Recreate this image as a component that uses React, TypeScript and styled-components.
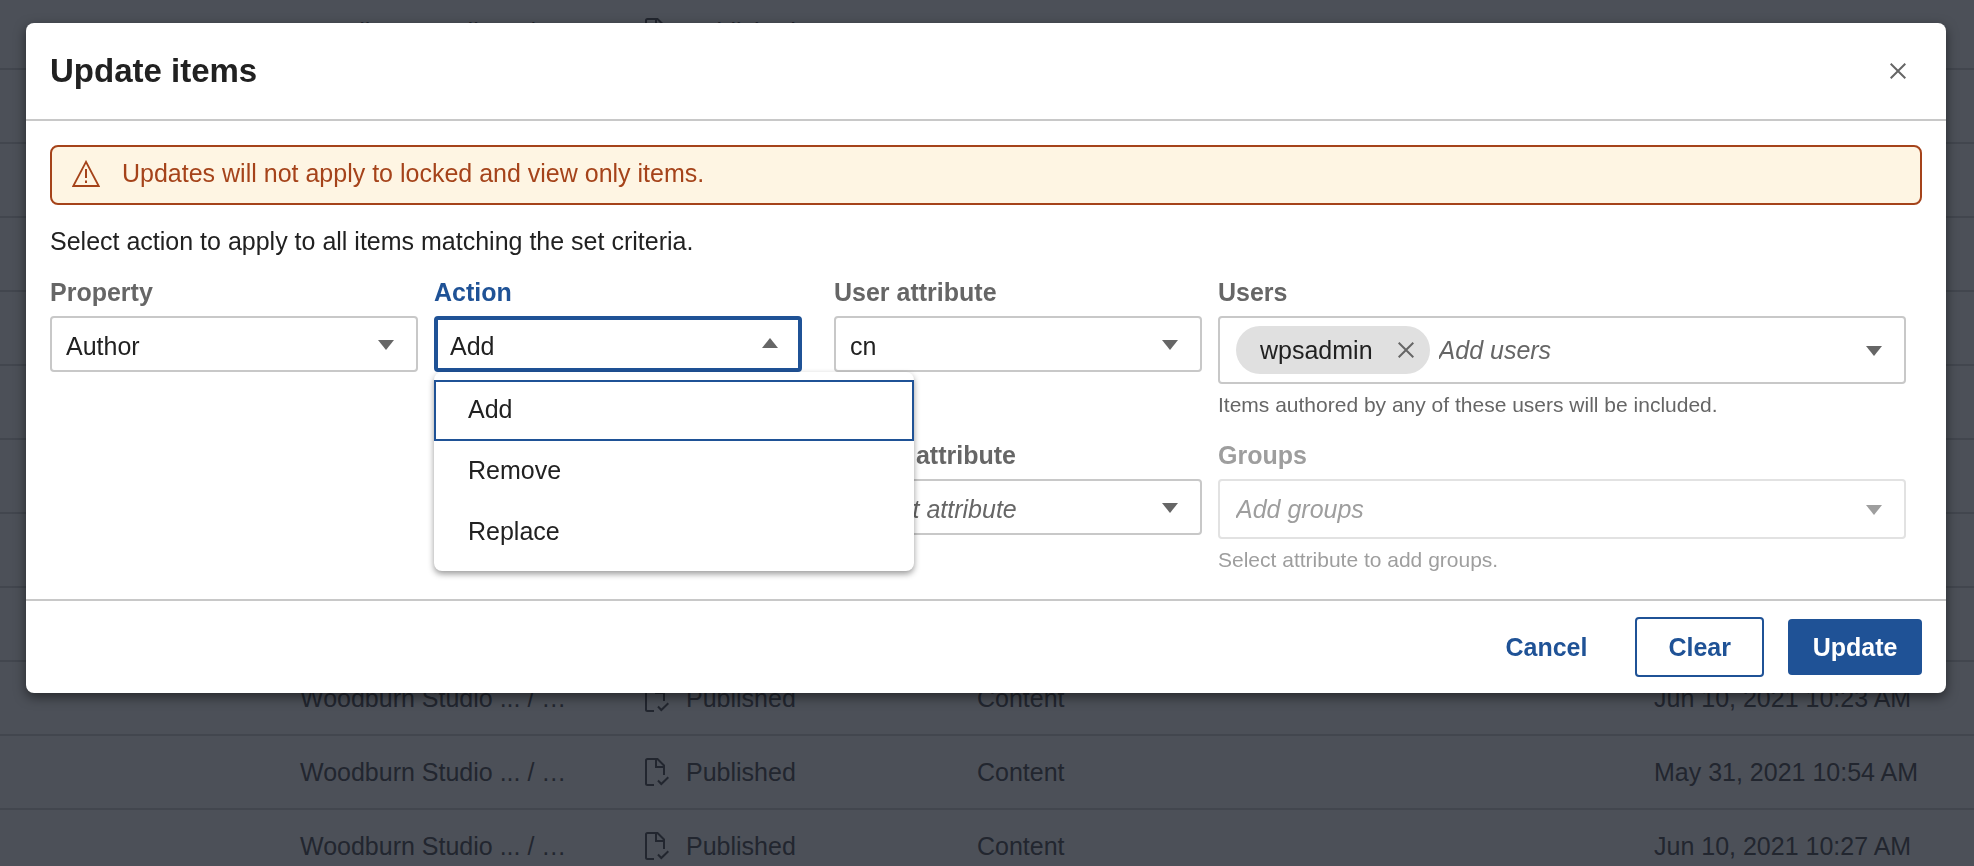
import React from "react";
import styled, { createGlobalStyle, css } from "styled-components";

const BLUE = "#1f5296";
const RUST = "#a5431a";
const INK = "#212121";
const GREY = "#666666";
const FAINT = "#9e9e9e";

const GlobalStyle = createGlobalStyle`
  *, *::before, *::after { box-sizing: border-box; }
  body { margin: 0; background: #4c5058; }
  body, button, input, select {
    font-family: "Liberation Sans", Arial, Helvetica, sans-serif;
    font-size: 25px;
    color: ${INK};
  }
`;

const Page = styled.main`
  height: 100vh;
  overflow: hidden;
`;

const ItemTable = styled.table`
  width: 100%;
  margin-top: -4px;
  border-collapse: separate;
  border-spacing: 0;
  table-layout: fixed;
  color: #22262f;
`;

const ItemCell = styled.td`
  height: 74px;
  padding: 0;
  border-bottom: 2px solid #42464e;
  white-space: nowrap;
`;

const Column = styled.col<{ $width?: string }>`
  width: ${(p) => p.$width ?? "auto"};
`;

const Status = styled.span`
  display: flex;
  align-items: center;
  gap: 17px;
`;

const Backdrop = styled.div`
  position: fixed;
  inset: 0;
  padding: 23px 28px 23px 26px;
`;

const Dialog = styled.section`
  background: #ffffff;
  border-radius: 8px;
  box-shadow: 0 4px 12px rgba(0, 0, 0, 0.5);
`;

const DialogHeader = styled.header`
  display: flex;
  align-items: center;
  justify-content: space-between;
  height: 98px;
  padding: 0 36px 0 24px;
  border-bottom: 2px solid #c8c8c8;
`;

const Title = styled.h1`
  margin: 0;
  font-size: 33px;
  line-height: 40px;
`;

const IconButton = styled.button`
  display: flex;
  align-items: center;
  justify-content: center;
  width: 24px;
  height: 24px;
  padding: 0;
  border: 0;
  background: none;
  color: ${GREY};
`;

const DialogBody = styled.div`
  padding: 24px 24px 27px;
`;

const Warning = styled.div`
  display: flex;
  align-items: center;
  gap: 22px;
  height: 60px;
  padding: 0 20px 4px;
  border: 2px solid ${RUST};
  border-radius: 8px;
  background: #fef5e3;
  color: ${RUST};
`;

const Instruction = styled.p`
  margin: 20px 0 19px;
  line-height: 32px;
`;

const Criteria = styled.form`
  display: grid;
  grid-template-columns: 47fr 67fr;
  gap: 32px;
  padding-right: 16px;
`;

const FieldGrid = styled.div<{ $columns: string }>`
  display: grid;
  grid-template-columns: ${(p) => p.$columns};
  gap: 22px 16px;
  align-content: start;
`;

const Field = styled.div`
  position: relative;
  min-width: 0;
`;

const Label = styled.label<{ $color?: string }>`
  display: block;
  margin-bottom: 8px;
  line-height: 32px;
  font-weight: 700;
  color: ${(p) => p.$color ?? GREY};
`;

const SelectBox = styled.div`
  display: grid;
  align-items: center;
  color: ${GREY};

  > * { grid-area: 1 / 1; }
  > svg { justify-self: end; margin-right: 24px; pointer-events: none; }
`;

const Select = styled.select<{ $open?: boolean; $empty?: boolean }>`
  width: 100%;
  height: 56px;
  padding: 3px 48px 0 14px;
  border: 2px solid #c8c8c8;
  border-radius: 4px;
  background: #ffffff;
  appearance: none;
  outline: 0;
  ${(p) => p.$open && css`
    padding: 3px 46px 0 12px;
    border: 4px solid ${BLUE};
  `}
  ${(p) => p.$empty && css`
    font-style: italic;
    color: ${GREY};
  `}
`;

const Menu = styled.ul`
  position: absolute;
  top: 100%;
  left: 0;
  z-index: 1;
  width: 480px;
  margin: 0;
  padding: 8px 0;
  list-style: none;
  background: #ffffff;
  border-radius: 8px;
  box-shadow: 0 3px 6px rgba(0, 0, 0, 0.4);
`;

const Option = styled.li<{ $active?: boolean }>`
  height: 61px;
  padding: 9px 32px;
  border: 2px solid ${(p) => (p.$active ? BLUE : "transparent")};
  line-height: 36px;
`;

const TokenBox = styled.div<{ $disabled?: boolean }>`
  display: flex;
  align-items: center;
  gap: 9px;
  height: ${(p) => (p.$disabled ? 60 : 68)}px;
  padding: 0 22px 0 16px;
  border: 2px solid ${(p) => (p.$disabled ? "#e2e2e2" : "#c8c8c8")};
  border-radius: 4px;
  color: ${(p) => (p.$disabled ? FAINT : GREY)};
`;

const Token = styled.span`
  display: flex;
  align-items: center;
  gap: 21px;
  height: 48px;
  padding: 0 12px 0 24px;
  border-radius: 24px;
  background: #e0e0e0;
  color: ${INK};
`;

const TokenInput = styled.input`
  flex: 1;
  min-width: 0;
  height: 48px;
  padding: 0;
  border: 0;
  outline: 0;
  background: none;

  &::placeholder {
    font-style: italic;
    color: ${GREY};
    opacity: 1;
  }
  &:disabled::placeholder { color: ${FAINT}; }
`;

const Help = styled.p<{ $disabled?: boolean }>`
  margin: 9px 0 0;
  font-size: 21px;
  line-height: 24px;
  color: ${(p) => (p.$disabled ? FAINT : GREY)};
`;

const DialogFooter = styled.footer`
  display: flex;
  align-items: center;
  justify-content: flex-end;
  gap: 24px;
  padding: 16px 24px;
  border-top: 2px solid #c8c8c8;
`;

const Button = styled.button<{ $kind: "text" | "outline" | "solid" }>`
  height: ${(p) => (p.$kind === "outline" ? 60 : 56)}px;
  padding: 0 24px;
  border: 0;
  border-radius: 4px;
  background: none;
  font-weight: 700;
  color: ${BLUE};
  ${(p) => p.$kind === "outline" && css`
    padding: 0 31px;
    border: 2px solid ${BLUE};
  `}
  ${(p) => p.$kind === "solid" && css`
    min-width: 134px;
    background: ${BLUE};
    color: #ffffff;
  `}
`;

const Caret = ({ up = false }: { up?: boolean }) => (
  <svg width="16" height="12" viewBox="0 0 16 12" aria-hidden="true">
    <path d={up ? "M0 10 8 0l8 10z" : "M0 2h16L8 12z"} fill="currentColor" />
  </svg>
);

const Cross = () => (
  <svg width="16" height="16" viewBox="0 0 16 16" aria-hidden="true">
    <path d="M.7.7l14.6 14.6M15.3.7.7 15.3" stroke="currentColor" strokeWidth="2" />
  </svg>
);

const WarningIcon = () => (
  <svg width="28" height="27" viewBox="0 0 28 27" fill="none" aria-hidden="true">
    <path d="M14 1.8 1.3 26h25.4z" stroke="currentColor" strokeWidth="1.8" />
    <path d="M14 9v9M14 20.500v2.500" stroke="currentColor" strokeWidth="2" />
  </svg>
);

const PublishedIcon = () => (
  <svg width="24" height="28" viewBox="0 0 24 28" fill="none" aria-hidden="true">
    <path
      d="M9 27H2.500Q1 27 1 25.500V2.500Q1 1 2.500 1H12.500L19 7.500V17M11 1V9H19M13 22.500 16.300 26 23.300 19.300"
      stroke="currentColor"
      strokeWidth="2"
    />
  </svg>
);

const dates: (string | null)[] = [
  "Jun 10, 2021 10:23 AM",
  null, null, null, null, null, null, null, null,
  "Jun 10, 2021 10:23 AM",
  "May 31, 2021 10:54 AM",
  "Jun 10, 2021 10:27 AM",
];

export default function App() {
  return (
    <Page>
      <GlobalStyle />
      <ItemTable>
        <colgroup>
          <Column $width="300px" />
          <Column $width="345px" />
          <Column $width="332px" />
          <Column />
          <Column $width="320px" />
        </colgroup>
        <tbody>
          {dates.map((date, i) => (
            <tr key={i}>
              <ItemCell />
              <ItemCell>{date && "Woodburn Studio ... / …"}</ItemCell>
              <ItemCell>
                {date && (
                  <Status>
                    <PublishedIcon />
                    Published
                  </Status>
                )}
              </ItemCell>
              <ItemCell>{date && "Content"}</ItemCell>
              <ItemCell>{date}</ItemCell>
            </tr>
          ))}
        </tbody>
      </ItemTable>

      <Backdrop>
        <Dialog role="dialog" aria-labelledby="dialog-title">
          <DialogHeader>
            <Title id="dialog-title">Update items</Title>
            <IconButton type="button" aria-label="Close">
              <Cross />
            </IconButton>
          </DialogHeader>

          <DialogBody>
            <Warning role="alert">
              <WarningIcon />
              Updates will not apply to locked and view only items.
            </Warning>
            <Instruction>
              Select action to apply to all items matching the set criteria.
            </Instruction>

            <Criteria id="criteria">
              <FieldGrid $columns="1fr 1fr">
                <Field>
                  <Label htmlFor="property">Property</Label>
                  <SelectBox>
                    <Select id="property">
                      <option>Author</option>
                    </Select>
                    <Caret />
                  </SelectBox>
                </Field>
                <Field>
                  <Label htmlFor="action" $color={BLUE}>Action</Label>
                  <SelectBox>
                    <Select id="action" $open>
                      <option>Add</option>
                      <option>Remove</option>
                      <option>Replace</option>
                    </Select>
                    <Caret up />
                  </SelectBox>
                  <Menu role="listbox" aria-label="Action">
                    <Option role="option" aria-selected="true" $active>Add</Option>
                    <Option role="option" aria-selected="false">Remove</Option>
                    <Option role="option" aria-selected="false">Replace</Option>
                  </Menu>
                </Field>
              </FieldGrid>

              <FieldGrid $columns="368fr 688fr">
                <Field>
                  <Label htmlFor="user-attribute">User attribute</Label>
                  <SelectBox>
                    <Select id="user-attribute">
                      <option>cn</option>
                    </Select>
                    <Caret />
                  </SelectBox>
                </Field>
                <Field>
                  <Label htmlFor="users">Users</Label>
                  <TokenBox>
                    <Token>
                      wpsadmin
                      <IconButton type="button" aria-label="Remove wpsadmin">
                        <Cross />
                      </IconButton>
                    </Token>
                    <TokenInput id="users" placeholder="Add users" />
                    <Caret />
                  </TokenBox>
                  <Help>Items authored by any of these users will be included.</Help>
                </Field>
                <Field>
                  <Label htmlFor="group-attribute">Group attribute</Label>
                  <SelectBox>
                    <Select id="group-attribute" $empty>
                      <option>Select attribute</option>
                    </Select>
                    <Caret />
                  </SelectBox>
                </Field>
                <Field>
                  <Label htmlFor="groups" $color={FAINT}>Groups</Label>
                  <TokenBox $disabled>
                    <TokenInput id="groups" placeholder="Add groups" disabled />
                    <Caret />
                  </TokenBox>
                  <Help $disabled>Select attribute to add groups.</Help>
                </Field>
              </FieldGrid>
            </Criteria>
          </DialogBody>

          <DialogFooter>
            <Button type="button" $kind="text">Cancel</Button>
            <Button type="reset" form="criteria" $kind="outline">Clear</Button>
            <Button type="submit" form="criteria" $kind="solid">Update</Button>
          </DialogFooter>
        </Dialog>
      </Backdrop>
    </Page>
  );
}
